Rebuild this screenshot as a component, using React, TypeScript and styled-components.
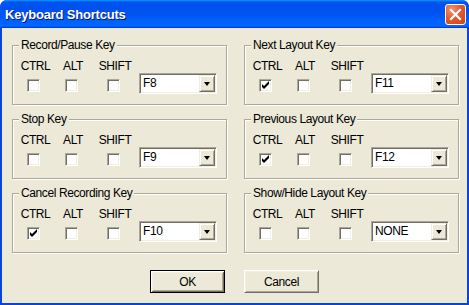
import React from "react";
import styled, { createGlobalStyle } from "styled-components";

const GlobalStyle = createGlobalStyle`
  html, body {
    margin: 0;
    padding: 0;
    background: #ffffff;
  }
  body {
    font-family: "Liberation Sans", Arial, sans-serif;
  }
`;

const shortcuts = [
  { title: "Record/Pause Key", ctrl: false, alt: false, shift: false, key: "F8" },
  { title: "Next Layout Key", ctrl: true, alt: false, shift: false, key: "F11" },
  { title: "Stop Key", ctrl: false, alt: false, shift: false, key: "F9" },
  { title: "Previous Layout Key", ctrl: true, alt: false, shift: false, key: "F12" },
  { title: "Cancel Recording Key", ctrl: true, alt: false, shift: false, key: "F10" },
  { title: "Show/Hide Layout Key", ctrl: false, alt: false, shift: false, key: "NONE" },
];

const Window = styled.div`
  width: 469px;
  height: 305px;
  display: flex;
  flex-direction: column;
  background: #0845d8;
  border-radius: 7px 7px 0 0;
  overflow: hidden;
`;

const TitleBar = styled.div`
  height: 28px;
  flex: none;
  display: flex;
  align-items: center;
  justify-content: space-between;
  padding: 0 3px 0 5px;
  background: linear-gradient(
    180deg,
    #0997ff,
    #0053ee 8%,
    #0050ee 40%,
    #0066ff 88%,
    #0066ff 93%,
    #005bff 95%,
    #003dd7 96%,
    #003dd7
  );
`;

const Title = styled.span`
  color: #ffffff;
  font-weight: bold;
  font-size: 13px;
  letter-spacing: -0.2px;
  text-shadow: 1px 1px 0 #0a1874;
  margin-top: 1px;
`;

const CloseButton = styled.div`
  width: 21px;
  height: 21px;
  box-sizing: border-box;
  border: 1px solid #ffffff;
  border-radius: 3px;
  background: radial-gradient(circle at 30% 25%, #f39270 0%, #e45a30 45%, #cc4218 100%);
  display: flex;
  align-items: center;
  justify-content: center;
`;

const Body = styled.div`
  flex: 1;
  margin: 0 2px 2px 2px;
  background: #ece9d8;
  padding: 11px 8px 0 10px;
  display: flex;
  flex-direction: column;
  font-size: 12px;
  letter-spacing: -0.4px;
  color: #000000;
`;

const GroupGrid = styled.div`
  display: grid;
  grid-template-columns: 215px 215px;
  column-gap: 17px;
  row-gap: 8px;
`;

const Group = styled.fieldset`
  margin: 0;
  min-width: 0;
  padding: 8px 0 12px 3px;
  border: 1px solid #aca899;
  box-shadow: inset 1px 1px 0 #ffffff, 1px 1px 0 #ffffff;
`;

const Legend = styled.legend`
  margin-left: 3px;
  padding: 0 2px;
  line-height: 13px;
  background: #ece9d8;
`;

const KeyRow = styled.div`
  display: grid;
  grid-template-columns: 39px 36px 48px 78px;
  align-items: start;
`;

const ModColumn = styled.div`
  display: flex;
  flex-direction: column;
  align-items: center;
  gap: 6px;
`;

const ModLabel = styled.span`
  line-height: 13px;
`;

const CheckBox = styled.div`
  width: 13px;
  height: 13px;
  box-sizing: border-box;
  margin-right: 4px;
  background: #ffffff;
  border: 1px solid;
  border-color: #aca899 #ffffff #ffffff #aca899;
  box-shadow: inset 1px 1px 0 #716f64, inset -1px -1px 0 #f1efe2;
  position: relative;

  svg {
    position: absolute;
    left: -1px;
    top: -1px;
  }
`;

const Combo = styled.div`
  align-self: end;
  margin-bottom: -2px;
  width: 78px;
  height: 21px;
  box-sizing: border-box;
  background: #ffffff;
  border: 1px solid;
  border-color: #aca899 #ffffff #ffffff #aca899;
  box-shadow: inset 1px 1px 0 #716f64, inset -1px -1px 0 #f1efe2;
  padding: 1px;
  display: flex;
  align-items: stretch;
`;

const ComboValue = styled.span`
  flex: 1;
  line-height: 17px;
  padding-left: 2px;
`;

const DropButton = styled.div`
  width: 16px;
  height: 17px;
  box-sizing: border-box;
  background: #ece9d8;
  border: 1px solid;
  border-color: #f1efe2 #716f64 #716f64 #f1efe2;
  box-shadow: inset 1px 1px 0 #ffffff, inset -1px -1px 0 #aca899;
  display: flex;
  align-items: center;
  justify-content: center;
`;

const Arrow = styled.div`
  width: 0;
  height: 0;
  margin-top: 1px;
  border-left: 3.5px solid transparent;
  border-right: 3.5px solid transparent;
  border-top: 4px solid #000000;
`;

const ButtonRow = styled.div`
  display: flex;
  justify-content: center;
  gap: 19px;
  margin-top: 17px;
  margin-left: -2px;
`;

const PushButton = styled.div<{ $default?: boolean }>`
  width: 75px;
  height: 23px;
  box-sizing: border-box;
  display: flex;
  align-items: center;
  justify-content: center;
  background: #ece9d8;
  border: 1px solid;
  border-color: ${(p) =>
    p.$default ? "#000000" : "#ffffff #716f64 #716f64 #ffffff"};
  box-shadow: ${(p) =>
    p.$default
      ? "inset 1px 1px 0 #ffffff, inset -1px -1px 0 #716f64, inset 2px 2px 0 #f1efe2, inset -2px -2px 0 #aca899"
      : "inset 1px 1px 0 #f1efe2, inset -1px -1px 0 #aca899"};
`;

const Check = ({ checked }: { checked: boolean }) => (
  <CheckBox>
    {checked && (
      <svg width="13" height="13" viewBox="0 0 13 13">
        <polygon points="3,5 5,7 10,2 10,5 5,10 3,8" fill="#000" />
      </svg>
    )}
  </CheckBox>
);

const ShortcutGroup = ({
  title,
  ctrl,
  alt,
  shift,
  keyName,
}: {
  title: string;
  ctrl: boolean;
  alt: boolean;
  shift: boolean;
  keyName: string;
}) => (
  <Group>
    <Legend>{title}</Legend>
    <KeyRow>
      <ModColumn>
        <ModLabel>CTRL</ModLabel>
        <Check checked={ctrl} />
      </ModColumn>
      <ModColumn>
        <ModLabel>ALT</ModLabel>
        <Check checked={alt} />
      </ModColumn>
      <ModColumn>
        <ModLabel>SHIFT</ModLabel>
        <Check checked={shift} />
      </ModColumn>
      <Combo>
        <ComboValue>{keyName}</ComboValue>
        <DropButton>
          <Arrow />
        </DropButton>
      </Combo>
    </KeyRow>
  </Group>
);

export default function App() {
  return (
    <>
      <GlobalStyle />
      <Window>
        <TitleBar>
          <Title>Keyboard Shortcuts</Title>
          <CloseButton>
            <svg width="13" height="13" viewBox="0 0 13 13">
              <path d="M2 2 L11 11 M11 2 L2 11" stroke="#fff" strokeWidth="2.2" strokeLinecap="square" />
            </svg>
          </CloseButton>
        </TitleBar>
        <Body>
          <GroupGrid>
            {shortcuts.map((s) => (
              <ShortcutGroup
                key={s.title}
                title={s.title}
                ctrl={s.ctrl}
                alt={s.alt}
                shift={s.shift}
                keyName={s.key}
              />
            ))}
          </GroupGrid>
          <ButtonRow>
            <PushButton $default>OK</PushButton>
            <PushButton>Cancel</PushButton>
          </ButtonRow>
        </Body>
      </Window>
    </>
  );
}
